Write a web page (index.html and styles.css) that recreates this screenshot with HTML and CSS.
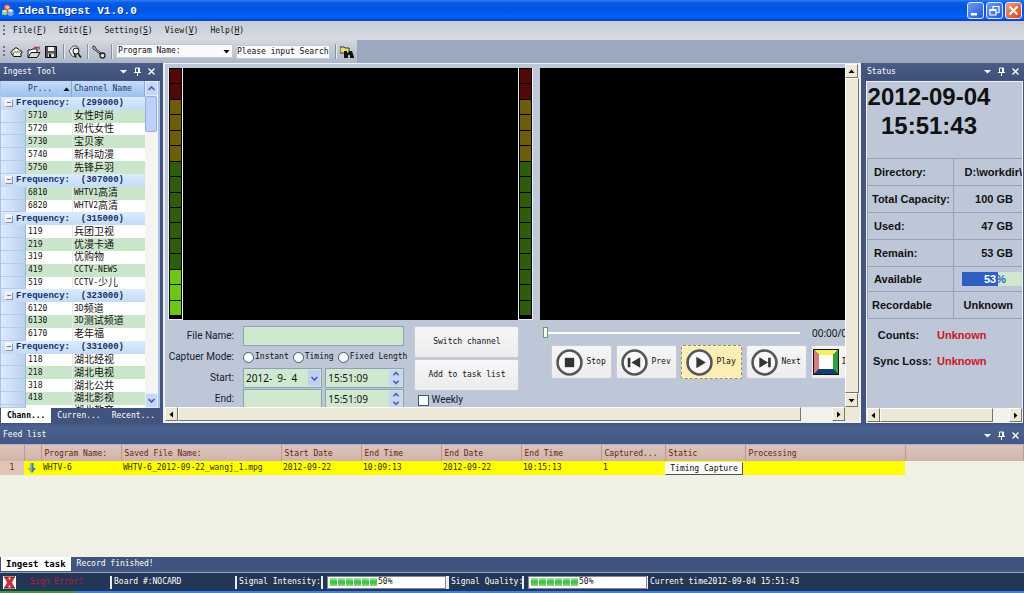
FILE: index.html
```html
<!DOCTYPE html>
<html lang="en">
<head>
<meta charset="utf-8">
<title>IdealIngest V1.0.0</title>
<link rel="stylesheet" href="styles.css">
</head>
<body>
<svg class="defs" width="0" height="0" aria-hidden="true">
  <symbol id="menu" viewBox="0 0 9 9"><path d="M1 3h7L4.500 6.500z" fill="currentColor"/></symbol>
  <symbol id="pin" viewBox="0 0 9 9"><path d="M2.500 1h4v4M2.500 1v4M5.500 1v4M1 5.500h7M4.500 5.500V9" fill="none" stroke="currentColor"/></symbol>
  <symbol id="close" viewBox="0 0 9 9"><path d="M1.500 1.500l6 6M7.500 1.500l-6 6" fill="none" stroke="currentColor" stroke-width="1.300"/></symbol>
  <symbol id="left" viewBox="0 0 9 9"><path d="M6 1.500v6L2.500 4.500z"/></symbol>
  <symbol id="right" viewBox="0 0 9 9"><path d="M3 1.500v6l3.500-3z"/></symbol>
  <symbol id="up" viewBox="0 0 9 9"><path d="M1.500 6h6l-3-3.500z"/></symbol>
  <symbol id="down" viewBox="0 0 9 9"><path d="M1.500 3h6l-3 3.500z"/></symbol>
  <symbol id="chev-up" viewBox="0 0 9 9"><path d="M1.500 6l3-3 3 3" fill="none" stroke="#4a6494" stroke-width="1.700"/></symbol>
  <symbol id="chev-down" viewBox="0 0 9 9"><path d="M1.500 3l3 3 3-3" fill="none" stroke="#4a6494" stroke-width="1.700"/></symbol>
</svg>

<header class="titlebar">
  <svg class="logo" viewBox="0 0 13 13"><circle cx="6" cy="3.500" r="3" fill="#e8593f"/><path d="M4 2.500l3-1 2 2-3 2z" fill="#ffb9a6"/><rect x="1" y="6" width="5" height="5" rx="1" fill="#9cd07c"/><path d="M1.500 7l2-1 2 1-2 1z" fill="#e9ffd8"/><path d="M6.500 6.500l3-1.500 3 1.500v4l-3 2-3-2z" fill="#86a8dc"/><path d="M6.500 6.500l3-1.500 3 1.500-3 1.500z" fill="#eaf2ff"/></svg>
  <h1>IdealIngest V1.0.0</h1>
  <div class="winbtns">
    <button aria-label="Minimize"><svg viewBox="0 0 15 15"><path d="M3 10h6v2.500H3z" fill="#fff"/></svg></button>
    <button aria-label="Restore"><svg viewBox="0 0 15 15"><path d="M6 6V3.500h6v6H9.500M3 6.500h6v5.500H3zM3 7.500h6" fill="none" stroke="#fff" stroke-width="1.200"/></svg></button>
    <button class="x" aria-label="Close"><svg viewBox="0 0 15 15"><path d="M3.500 3.500l8 8M11.500 3.500l-8 8" stroke="#fff" stroke-width="2"/></svg></button>
  </div>
</header>

<nav class="menubar">
  <i class="grip"></i>
  <a href="#">File(<u>F</u>)</a><a href="#">Edit(<u>E</u>)</a><a href="#">Setting(<u>S</u>)</a><a href="#">View(<u>V</u>)</a><a href="#">Help(<u>H</u>)</a>
</nav>

<div class="toolrow">
  <div class="toolbar">
    <i class="grip"></i>
    <button aria-label="Home"><svg viewBox="0 0 14 14"><path d="M1.500 6L6 2.500 9 4.500l3 3-1 .5v3.500H3.500L1 7.500z" fill="#eef0e0" stroke="#111"/><path d="M3.500 11.500V8L1.500 6M4 7h6M10.500 4.500l2.500 3" stroke="#668050" fill="none"/></svg></button>
    <button aria-label="Open"><svg viewBox="0 0 14 14"><path d="M1 12V5h3l1-1h5v3" fill="#fff" stroke="#111"/><path d="M1 12.500L4 7.500h9l-3 5z" fill="#d8d8d8" stroke="#111"/><path d="M7 2.500h5v2" stroke="#c33" stroke-width="1.500" fill="none"/></svg></button>
    <button aria-label="Save"><svg viewBox="0 0 14 14"><path d="M1.500 1.500h11v11h-11z" fill="#555" stroke="#111"/><path d="M4 2h6v4H4z" fill="#f4f4f4"/><path d="M4 8.500h6V12H4z" fill="#ddd"/><path d="M5 9h2v3H5z" fill="#111"/></svg></button>
    <i class="sep"></i>
    <button aria-label="Find"><svg viewBox="0 0 14 14"><path d="M1 6l4-5 4 0 2 3-4 8-3-1z" fill="#e8ebf0" stroke="#555"/><circle cx="8" cy="6" r="3" fill="#fff" stroke="#111"/><path d="M10 8.500l3 4M6 8l2 4.500" stroke="#111" stroke-width="1.500"/></svg></button>
    <i class="sep"></i>
    <button aria-label="Tools"><svg viewBox="0 0 14 14"><path d="M1 1l2 .5L4 4l5 4M1 1v3l2 1 5 4" fill="none" stroke="#333"/><circle cx="10.500" cy="10.500" r="2.500" fill="#ddd" stroke="#222" stroke-width="1.300"/></svg></button>
    <i class="sep"></i>
    <span class="combo"><select aria-label="Search field"><option>Program Name:</option></select><svg viewBox="0 0 9 9"><use href="#down"/></svg></span>
    <input class="search" aria-label="Search" value="Please input Search">
    <i class="sep"></i>
    <button aria-label="Search"><svg viewBox="0 0 14 14"><path d="M0 2h4l1 1h4v5H0z" fill="#e6df70" stroke="#333"/><path d="M4 6h3v2h2V6h3l2 6v1h-4v-3H8v3H4z" fill="#111"/></svg></button>
  </div>
</div>

<main class="work">
  <section class="ingest">
    <div class="cap"><h2>Ingest Tool</h2><svg><use href="#menu"/></svg><svg><use href="#pin"/></svg><svg><use href="#close"/></svg></div>
    <div class="listbox">
      <table class="channels">
        <thead><tr><th></th><th>Pr...<svg viewBox="0 0 9 9"><use href="#up"/></svg></th><th>Channel Name</th></tr></thead>
        <tbody>
          <tr class="grp"><th colspan="3"><i>−</i>Frequency:  (299000)</th></tr>
          <tr><td></td><td>5710</td><td>女性时尚</td></tr>
          <tr><td></td><td>5720</td><td>现代女性</td></tr>
          <tr><td></td><td>5730</td><td>宝贝家</td></tr>
          <tr><td></td><td>5740</td><td>新科动漫</td></tr>
          <tr><td></td><td>5750</td><td>先锋乒羽</td></tr>
        </tbody>
        <tbody>
          <tr class="grp"><th colspan="3"><i>−</i>Frequency:  (307000)</th></tr>
          <tr><td></td><td>6810</td><td><small>WHTV1</small>高清</td></tr>
          <tr><td></td><td>6820</td><td><small>WHTV2</small>高清</td></tr>
        </tbody>
        <tbody class="alt">
          <tr class="grp"><th colspan="3"><i>−</i>Frequency:  (315000)</th></tr>
          <tr><td></td><td>119</td><td>兵团卫视</td></tr>
          <tr><td></td><td>219</td><td>优漫卡通</td></tr>
          <tr><td></td><td>319</td><td>优购物</td></tr>
          <tr><td></td><td>419</td><td><small>CCTV-NEWS</small></td></tr>
          <tr><td></td><td>519</td><td><small>CCTV-</small>少儿</td></tr>
        </tbody>
        <tbody class="alt">
          <tr class="grp"><th colspan="3"><i>−</i>Frequency:  (323000)</th></tr>
          <tr><td></td><td>6120</td><td><small>3D</small>频道</td></tr>
          <tr><td></td><td>6130</td><td><small>3D</small>测试频道</td></tr>
          <tr><td></td><td>6170</td><td>老年福</td></tr>
        </tbody>
        <tbody class="alt">
          <tr class="grp"><th colspan="3"><i>−</i>Frequency:  (331000)</th></tr>
          <tr><td></td><td>118</td><td>湖北经视</td></tr>
          <tr><td></td><td>218</td><td>湖北电视</td></tr>
          <tr><td></td><td>318</td><td>湖北公共</td></tr>
          <tr><td></td><td>418</td><td>湖北影视</td></tr>
          <tr><td></td><td></td><td>湖北教育</td></tr>
        </tbody>
      </table>
      <div class="xpscroll"><button aria-label="Scroll up"><svg><use href="#chev-up"/></svg></button><i></i><span></span><button aria-label="Scroll down"><svg><use href="#chev-down"/></svg></button></div>
    </div>
    <div class="tabs"><button class="on">Chann...</button><button>Curren...</button><button>Recent...</button></div>
  </section>

  <section class="centre">
    <div class="view">
      <div class="capture">
        <div class="screens">
          <div class="meter"><i class="r"></i><i class="r"></i><i class="y"></i><i class="y"></i><i class="y"></i><i class="y"></i><i></i><i></i><i></i><i></i><i></i><i></i><i></i><i class="l"></i><i class="l"></i><i class="l"></i></div>
          <div class="video"></div>
          <div class="meter"><i class="r"></i><i class="r"></i><i class="y"></i><i class="y"></i><i class="y"></i><i class="y"></i><i></i><i></i><i></i><i></i><i></i><i></i><i></i><i></i><i></i><i></i></div>
        </div>
        <form class="controls">
          <div class="fields">
            <label for="fn">File Name:</label><input id="fn" class="box">
            <span class="lab">Captuer Mode:</span>
            <div class="radios"><label><input type="radio" name="m">Instant</label><label><input type="radio" name="m">Timing</label><label><input type="radio" name="m">Fixed Length</label></div>
            <label for="sd">Start:</label>
            <div class="when"><div class="box"><input id="sd" value="2012-  9-  4"><button type="button" class="drop" aria-label="Pick date"><svg><use href="#chev-down"/></svg></button></div><div class="box"><input aria-label="Start time" value="15:51:09"><span class="spin"><button type="button" aria-label="Later"><svg><use href="#chev-up"/></svg></button><button type="button" aria-label="Earlier"><svg><use href="#chev-down"/></svg></button></span></div></div>
            <label for="ed">End:</label>
            <div class="when"><div class="box"><input id="ed"></div><div class="box"><input aria-label="End time" value="15:51:09"><span class="spin"><button type="button" aria-label="Later"><svg><use href="#chev-up"/></svg></button><button type="button" aria-label="Earlier"><svg><use href="#chev-down"/></svg></button></span></div></div>
          </div>
          <div class="actions">
            <button type="button">Switch channel</button>
            <button type="button">Add to task list</button>
            <label><input type="checkbox">Weekly</label>
          </div>
        </form>
      </div>
      <div class="player">
        <div class="video"></div>
        <div class="seek"><input type="range" min="0" max="100" value="0" aria-label="Position"><span>00:00/00:00</span></div>
        <div class="buttons">
          <button><svg viewBox="0 0 26 26"><circle cx="13" cy="13" r="11.500" fill="#f8f8f8" stroke="#555" stroke-width="2.500"/><path d="M8.500 8.500h9v9h-9z" fill="#333"/></svg>Stop</button>
          <button><svg viewBox="0 0 26 26"><circle cx="13" cy="13" r="11.500" fill="#f8f8f8" stroke="#555" stroke-width="2.500"/><path d="M6.500 8.500H9v9H6.500zM18.500 8v10L10 13z" fill="#333"/></svg>Prev</button>
          <button class="focus"><svg viewBox="0 0 26 26"><circle cx="13" cy="13" r="11.500" fill="#f8f8f8" stroke="#555" stroke-width="2.500"/><path d="M10 7.500v11l9-5.500z" fill="#333"/></svg>Play</button>
          <button><svg viewBox="0 0 26 26"><circle cx="13" cy="13" r="11.500" fill="#f8f8f8" stroke="#555" stroke-width="2.500"/><path d="M8 8v10l8.500-5zM16.500 8.500H19v9h-2.500z" fill="#333"/></svg>Next</button>
          <button class="pic"><svg viewBox="0 0 26 26"><path d="M0 0h26v26H0z" fill="#111"/><path d="M1 1h24l-5 5H6z" fill="#f6ef5e"/><path d="M1 1l5 5v14l-5 5z" fill="#d87a80"/><path d="M25 1l-5 5v14l5 5z" fill="#2fa03c"/><path d="M1 25l5-5h14l5 5z" fill="#10406e"/><path d="M6 6h14v14H6z" fill="#fff"/></svg>Image</button>
        </div>
      </div>
    </div>
    <div class="scroll v"><button aria-label="Scroll up"><svg><use href="#up"/></svg></button><i></i><button aria-label="Scroll down"><svg><use href="#down"/></svg></button></div>
    <div class="scroll h"><button aria-label="Scroll left"><svg><use href="#left"/></svg></button><i></i><span></span><button aria-label="Scroll right"><svg><use href="#right"/></svg></button></div>
    <div class="corner"></div>
  </section>

  <section class="status">
    <div class="cap"><h2>Status</h2><svg><use href="#menu"/></svg><svg><use href="#pin"/></svg><svg><use href="#close"/></svg></div>
    <div class="pane">
      <div class="info">
        <div class="clock"><div>2012-09-04</div><div>15:51:43</div></div>
        <table>
          <tr><th>Directory:</th><td>D:\workdir\</td></tr>
          <tr><th>Total Capacity:</th><td>100 GB</td></tr>
          <tr><th>Used:</th><td>47 GB</td></tr>
          <tr><th>Remain:</th><td>53 GB</td></tr>
          <tr><th>Available</th><td class="gauge"><div>53<span>%</span></div></td></tr>
          <tr><th>Recordable</th><td>Unknown</td></tr>
        </table>
        <dl><dt>Counts:</dt><dd>Unknown</dd><dt>Sync Loss:</dt><dd>Unknown</dd></dl>
      </div>
      <div class="scroll h"><button aria-label="Scroll left"><svg><use href="#left"/></svg></button><i></i><span></span><button aria-label="Scroll right"><svg><use href="#right"/></svg></button></div>
    </div>
  </section>
</main>

<section class="feed">
  <div class="cap"><h2>Feed list</h2><svg><use href="#menu"/></svg><svg><use href="#pin"/></svg><svg><use href="#close"/></svg></div>
  <div class="feedbody">
    <table>
      <colgroup><col class="c24"><col class="c17"><col class="c80"><col class="c160"><col class="c80"><col class="c80"><col class="c80"><col class="c80"><col class="c64"><col class="c80"><col class="c160"><col></colgroup>
      <thead><tr><th></th><th></th><th>Program Name:</th><th>Saved File Name:</th><th>Start Date</th><th>End Time</th><th>End Date</th><th>End Time</th><th>Captured...</th><th>Static</th><th>Processing</th><th></th></tr></thead>
      <tbody><tr><th>1</th><td class="ico"><svg viewBox="0 0 8 10"><path d="M2.500 0h3v5H8L4 10 0 5h2.500z" fill="#3c78a8"/><path d="M2.500 0H4v9L0 5h2.500z" fill="#7fb0c8"/></svg></td><td>WHTV-6</td><td>WHTV-6_2012-09-22_wangj_1.mpg</td><td>2012-09-22</td><td>10:09:13</td><td>2012-09-22</td><td>10:15:13</td><td>1</td><td class="btn"><button>Timing Capture</button></td><td></td><td class="off"></td></tr></tbody>
    </table>
  </div>
  <div class="tabs"><button class="on">Ingest task</button><button>Record finished!</button></div>
</section>

<footer class="statusbar">
  <div class="err"><svg viewBox="0 0 13 13"><path d="M0 0h13v13H0z" fill="#fff"/><path d="M1 1h4l1.500 3L8 1h4L9 6.500l3 5.500H8L6.500 9 5 12H1l3-5.500z" fill="#c8323c"/><path d="M1 1h11M1 12h11" stroke="#511"/></svg><span>Sign Error!</span></div>
  <div class="board">Board #:NOCARD</div>
  <div class="sig">Signal Intensity:</div>
  <div class="prog"><div class="bar"><i></i><i></i><i></i><i></i><i></i><i></i><span>50%</span></div></div>
  <div class="sig q">Signal Quality:</div>
  <div class="prog"><div class="bar"><i></i><i></i><i></i><i></i><i></i><i></i><span>50%</span></div></div>
  <div class="now">Current time2012-09-04 15:51:43</div>
</footer>
<div class="taskbar"></div>
</body>
</html>
```
FILE: styles.css
```css
* { box-sizing: border-box; }
body {
  margin: 0; height: 100vh; overflow: hidden;
  display: grid; grid-template-columns: minmax(0, 1fr);
  grid-template-rows: 21px 19px 23px minmax(0, 361fr) minmax(0, 148fr) 19px 2px;
  font: 8px/12px "DejaVu Sans Mono", "Noto Sans CJK SC", monospace;
  color: #111; background: #465b85; white-space: nowrap;
}
button, input, select { font: inherit; color: inherit; margin: 0; padding: 0; border: 0; border-radius: 0; background: none; min-width: 0; }
h1, h2, dl, dd { margin: 0; font: inherit; }
a { color: inherit; text-decoration: none; }
table { border-collapse: collapse; border-spacing: 0; }
th, td { padding: 0; font-weight: inherit; text-align: left; }
svg { display: block; width: 9px; height: 9px; flex: none; }
.defs { position: absolute; }

.titlebar { display: flex; align-items: center; padding: 0 2px 0 1px; gap: 4px; color: #fff;
  background: linear-gradient(#2a80f4 0, #0a5ae6 3px, #0054e0 10px, #0262fa 17px, #0342c4 21px); }
.logo { width: 13px; height: 13px; }
.titlebar h1 { flex: 1; font: bold 11px/16px "Liberation Mono", monospace; text-shadow: 1px 1px #0a3390; }
.winbtns { display: flex; gap: 2px; }
.winbtns button { width: 17px; height: 17px; border: 1px solid #dce8ff; border-radius: 3px; background: linear-gradient(135deg, #6d9bf5, #2259d8); }
.winbtns .x { background: linear-gradient(135deg, #f09a80, #d8421c); }
.winbtns svg { width: 15px; height: 15px; }

.menubar { display: flex; align-items: center; gap: 12px; padding-left: 3px; background: linear-gradient(#c6cbd6, #d9dce3); }
.grip { width: 2px; height: 12px; flex: none; background: repeating-linear-gradient(#6a7690 0 2px, transparent 2px 4px); }
.menubar .grip { margin-right: -4px; }
.toolrow { background: #9ba8c0; display: flex; }
.toolbar { display: flex; align-items: center; gap: 3px; width: 357px; padding: 0 3px; background: linear-gradient(#d3d7df, #aeb7c8); }
.toolbar button { width: 14px; height: 14px; }
.toolbar .grip { margin-right: 2px; }
.toolbar button svg { width: 14px; height: 14px; }
.sep { width: 1px; height: 15px; flex: none; background: #8490a8; box-shadow: 1px 0 #e4e8ef; margin: 0 1px 0 2px; }
.combo { position: relative; flex: 1; height: 14px; margin-bottom: 2px; }
.combo select { appearance: none; width: 100%; height: 14px; padding-left: 1px; background: #fafafc; border: 1px solid #c4cad6; display: block; }
.combo svg { position: absolute; right: 2px; top: 3px; }
.search { width: 94px; height: 14px; background: #fafafc; border: 1px solid #c4cad6; }

.work { display: grid; grid-template-columns: 160px minmax(0, 1fr) 160px; gap: 3px; background: #43557d; padding-bottom: 1px; min-height: 0; }
.cap { height: 17px; flex: none; display: flex; align-items: center; gap: 5px; padding: 0 4px 0 3px; color: #fff; background: linear-gradient(#4a5d88, #3f5078); }
.cap h2 { flex: 1; }
.ingest, .status { display: flex; flex-direction: column; min-height: 0; }
.listbox { flex: 1; min-height: 0; display: flex; margin-top: 1px; padding: 0 2px 0 1px; background: #a9c4ea; }
.channels { flex: 1; min-width: 0; display: flex; flex-direction: column; overflow: hidden; background: #fff; }
.channels tbody, .channels thead { display: contents; }
.channels tr { flex: 1 1 0; min-height: 0; display: grid; grid-template-columns: 25px 46px 1fr; grid-template-rows: minmax(0, 1fr); }
.channels tr > * { display: flex; align-items: center; min-height: 0; padding-left: 2px; }
.channels thead tr { flex: none; height: 16px; color: #1c3a70; background: linear-gradient(#c4dcfa, #9cc0ee); }
.channels thead th { border-right: 1px solid #86a8d8; }
.channels thead th:first-child { border: 0; }
.channels thead svg { margin-left: auto; }
.channels td:last-child { font-size: 10px; padding-left: 1px; border-left: 1px solid #dce8f4; }
.channels small { font-size: 8px; }
.channels td:first-child { background: linear-gradient(90deg, #dfeafa, #b9d0f0); border-bottom: 1px solid #b4caea; border-right: 1px solid #9fb8da; }
.channels tbody tr:nth-child(even) td:nth-child(n+2) { background: #cbe5cb; }
.channels .alt tr:nth-child(even) td:nth-child(n+2) { background: #fff; }
.channels .alt tr:nth-child(odd) td:nth-child(n+2) { background: #cbe5cb; }
.channels tr.grp { display: flex; background: linear-gradient(#dcebfd, #c3dbf7); color: #13306c; font: bold 9px/12px "Liberation Mono", monospace; }
.channels tr.grp th { flex: 1; white-space: pre; }
.channels tbody:last-child tr:last-child { flex: none; height: 3px; overflow: hidden; }
.channels tbody:last-child tr:last-child td { align-items: flex-start; overflow: hidden; }
.grp i { width: 8px; height: 8px; margin: 0 3px 0 2px; font: 8px/6px "Liberation Sans", sans-serif; text-align: center; background: #eee; border: 1px solid #8c94a4; border-top-color: #fff; border-left-color: #fff; }
.xpscroll { width: 13px; display: flex; flex-direction: column; background: #f4f4f0; }
.xpscroll button { height: 15px; display: grid; place-items: center; background: #c6d6fa; border: 1px solid #e4ecfc; border-radius: 2px; }
.xpscroll i { flex: 34 1 0; background: #bfd0f8; border: 1px solid #94aee0; border-radius: 2px; margin-right: 1px; }
.xpscroll span { flex: 260 1 0; }
.tabs { height: 14px; flex: none; display: flex; padding-left: 1px; color: #fff; background: #40547e; }
.tabs button { padding: 0 6px; }
.tabs .on { background: #fff; color: #000; font-weight: bold; padding: 0 4px; }
.feed .tabs .on { font-size: 9px; padding: 0 5px; }
.ingest .tabs { height: 15px; }
.ingest .tabs button { flex: 1; }

.centre { display: grid; grid-template-columns: minmax(0, 1fr) 14px; grid-template-rows: minmax(0, 1fr) 14px; border: 1px solid #eef0f4; border-width: 1px 2px 2px; background: #bdc7d8; }
.view { display: grid; grid-template-columns: minmax(0, 366fr) minmax(0, 305fr); gap: 7px; padding: 4px 0 0 3px; overflow: hidden; }
.capture, .player { display: flex; flex-direction: column; min-height: 0; min-width: 0; overflow: hidden; }
.screens { flex: 1; min-height: 0; display: flex; }
.video { flex: 1; background: #000; min-height: 0; }
.meter { width: 15px; display: flex; flex-direction: column; gap: 1px; padding: 1px 1px 4px; background: #000; border: 1px solid #eee; border-top: 0; }
.meter i { flex: 1; background: #2c5c0c; }
.meter .r { background: #500808; }
.meter .y { background: #6c5c0c; }
.meter .l { background: #6cc814; }
.controls { height: 87px; flex: none; display: flex; gap: 10px; padding: 6px 14px 0 0; overflow: hidden; font-family: "Liberation Mono", monospace; }
.fields { flex: 1; display: grid; grid-template-columns: 66px minmax(0, 1fr); grid-template-rows: 20px 20px 20px 20px; gap: 1px 9px; align-items: center; text-align: right; }
.fields > label, .lab, .actions label { font: 10px/14px Roboto, sans-serif; text-align: right; justify-self: end; color: #16202e; }
.box { height: 20px; background: #cfe8cf; border: 1px solid #88a4b4; display: flex; width: 100%; }
.box input { flex: 1; width: 0; padding-left: 2px; font: 10px/14px "Noto Sans", sans-serif; white-space: pre; }
.radios { display: flex; gap: 4px; font: 8px/12px "DejaVu Sans Mono", monospace; }
.radios label { display: flex; align-items: center; gap: 1px; }
.radios input, .actions input { appearance: none; width: 11px; height: 11px; border: 1px solid #3a5878; border-radius: 50%; background: #fff; }
.when { display: grid; grid-template-columns: 1fr 1fr; gap: 3px; }
.drop { width: 12px; background: #bfd0f4; display: grid; place-items: center; margin: 1px; }
.spin { width: 13px; display: grid; background: #c6d4f6; margin: 1px; }
.spin button { display: grid; place-items: center; min-height: 0; }
.spin svg { width: 8px; height: 8px; }
.actions { width: 105px; display: flex; flex-direction: column; gap: 1px; font-family: "DejaVu Sans Mono", monospace; }
.actions button, .buttons button { height: 32px; flex: none; background: linear-gradient(#f6f6f6, #ececee); border: 1px solid #c8ccd2; border-radius: 2px; }
.actions label { display: flex; align-items: center; gap: 2px; align-self: start; padding-left: 4px; line-height: 16px; }
.actions input { border-radius: 0; }
.player .seek { display: flex; align-items: center; height: 25px; flex: none; gap: 12px; padding-left: 3px; overflow: hidden; font: 10px/14px "Noto Sans", sans-serif; }
.seek input { appearance: none; flex: 1; height: 12px; background: linear-gradient(transparent 5px, #fff 5px 7px, transparent 7px); }
.seek input::-webkit-slider-thumb { appearance: none; width: 5px; height: 11px; background: #f4fcf0; border: 1px solid #6a9c70; }
.seek span { width: 33px; overflow: hidden; }
.buttons { height: 62px; flex: none; display: flex; gap: 4px; padding: 0 0 0 11px; overflow: hidden; }
.buttons button { width: 61px; height: 34px; display: flex; align-items: center; gap: 3px; padding-left: 4px; }
.buttons svg { width: 27px; height: 27px; }
.buttons .pic { padding-left: 1px; gap: 2px; }
.buttons .pic svg { width: 26px; height: 26px; }
.buttons .focus { background: #fbeeb4; border: 1px dashed #a08c50; box-shadow: inset 0 0 0 1px #fff4cc; }
.scroll { display: flex; background: #f3f1ec; }
.scroll.v { flex-direction: column; }
.scroll button, .scroll i { background: #ece9d8; border: 1px solid; border-color: #fff #77756a #77756a #fff; }
.scroll button { display: grid; place-items: center; flex: none; width: 13px; height: 14px; }
.scroll i { flex: 624 1 0; }
.scroll span { flex: 31 1 0; }
.corner { background: #ece9d8; }

.pane { flex: 1; min-height: 0; display: flex; flex-direction: column; margin: 1px 1px 0 2px; border: 1px solid #eef0f4; background: #bdc7d8; }
.pane .scroll i { flex: 113 1 0; }
.pane .scroll span { flex: 16 1 0; }
.info { flex: 1; overflow: hidden; font: bold 11px/14px "Liberation Sans", sans-serif; }
.clock { font-size: 24px; line-height: 29px; width: 124px; text-align: center; height: 76px; }
.info table { width: 100%; table-layout: fixed; border-top: 1px solid #94a2b8; }
.info tr { height: 27px; border-bottom: 1px solid #94a2b8; }
.info tr:nth-child(5) { height: 25px; }
.info th { width: 86px; padding-left: 6px; border-right: 1px solid #94a2b8; border-left: 1px solid #94a2b8; }
.info tr:nth-child(2) th, .info tr:last-child th { padding-left: 4px; }
.info td { padding-right: 9px; text-align: right; overflow: hidden; }
.info tr:first-child td { padding-right: 0; }
.info td.gauge { padding: 0 0 0 8px; }
.gauge div { height: 14px; color: #fff; text-align: center; padding-left: 6px; background: linear-gradient(90deg, #2f5fc4 60%, #cfe8cf 60%); }
.gauge span { color: #2f5fc4; }
.info dl { display: grid; grid-template-columns: 58px 1fr; gap: 12px 6px; padding: 9px 0 0 6px; }
.info dt { text-align: center; }
.info dt:first-child { padding-right: 7px; }
.info dd { color: #cc1624; }

.feed { display: flex; flex-direction: column; padding: 2px 0 1px; min-height: 0; }
.feed .cap { background: linear-gradient(#4c628e, #435784); height: 18px; }
.feedbody { flex: 1; min-height: 0; background: #f1f0e4; border-top: 1px solid #b0b4bc; }
.feed table { width: 100%; table-layout: fixed; }
.c17 { width: 17px; } .c24 { width: 24px; } .c64 { width: 64px; } .c80 { width: 80px; } .c160 { width: 160px; }
.feed thead tr { height: 16px; background: linear-gradient(#dcc4bc, #d0b4a8); color: #6a2418; }
.feed thead th { padding: 1px 0 0 3px; border-right: 1px solid #b89c94; }
.feed tbody tr { height: 14px; background: #ffff00; color: #33330c; }
.feed tbody th { text-align: center; color: #6a2418; background: #e0c4b8; }
.feed tbody td { padding-left: 2px; }
.feed td.ico { padding-left: 4px; }
.ico svg { width: 8px; height: 10px; }
.feed td.btn { padding: 0; }
.btn button { display: block; width: 78px; height: 13px; background: #fafaf6; border: 1px solid; border-color: #fff #555 #555 #fff; color: #111; }
.feed td.off { background: #f1f0e4; }

.statusbar { display: flex; align-items: center; color: #fff; background: #243656; border-top: 1px solid #90a0bc; }
.statusbar > div { height: 13px; }
.err { width: 110px; display: flex; gap: 14px; padding-left: 3px; color: #b81c34; }
.err svg { width: 13px; height: 13px; }
.board, .sig { border-left: 2px solid #e8ecf4; padding-left: 2px; }
.board { width: 125px; }
.sig { width: 88px; border-right: 2px solid #e8ecf4; }
.sig.q { width: 77px; }
.prog { width: 124px; padding-left: 4px; border-right: 1px solid #e8ecf4; }
.bar { height: 13px; display: flex; align-items: center; gap: 1px; padding: 0 2px; background: #fff; border: 1px solid #888; color: #111; }
.bar i { width: 7px; height: 8px; background: linear-gradient(#a4e8a4, #34c034 50%, #84dc84); }
.now { padding-left: 2px; }
.taskbar { background: linear-gradient(90deg, #3c9a3c 75px, #3a80ec 75px); }
```
